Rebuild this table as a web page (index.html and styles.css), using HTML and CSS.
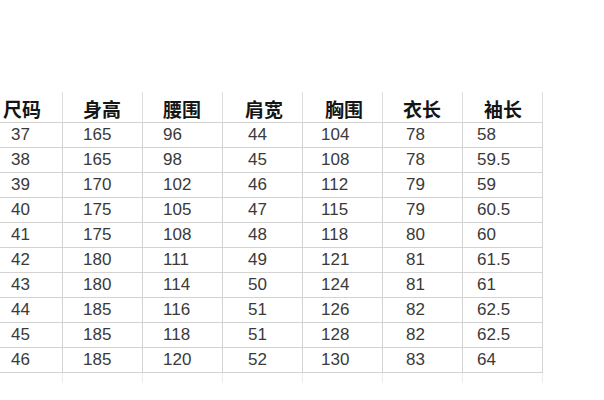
FILE: index.html
```html
<!DOCTYPE html>
<html lang="zh-CN">
<head>
<meta charset="utf-8">
<title>尺码表</title>
<link rel="stylesheet" href="styles.css">
</head>
<body>
<div class="sheet">
  <div class="row head">
    <div class="cell">尺码</div><div class="cell">身高</div><div class="cell">腰围</div><div class="cell">肩宽</div><div class="cell">胸围</div><div class="cell">衣长</div><div class="cell">袖长</div>
  </div>
  <div class="row"><div class="cell">37</div><div class="cell">165</div><div class="cell">96</div><div class="cell">44</div><div class="cell">104</div><div class="cell">78</div><div class="cell">58</div></div>
  <div class="row"><div class="cell">38</div><div class="cell">165</div><div class="cell">98</div><div class="cell">45</div><div class="cell">108</div><div class="cell">78</div><div class="cell">59.5</div></div>
  <div class="row"><div class="cell">39</div><div class="cell">170</div><div class="cell">102</div><div class="cell">46</div><div class="cell">112</div><div class="cell">79</div><div class="cell">59</div></div>
  <div class="row"><div class="cell">40</div><div class="cell">175</div><div class="cell">105</div><div class="cell">47</div><div class="cell">115</div><div class="cell">79</div><div class="cell">60.5</div></div>
  <div class="row"><div class="cell">41</div><div class="cell">175</div><div class="cell">108</div><div class="cell">48</div><div class="cell">118</div><div class="cell">80</div><div class="cell">60</div></div>
  <div class="row"><div class="cell">42</div><div class="cell">180</div><div class="cell">111</div><div class="cell">49</div><div class="cell">121</div><div class="cell">81</div><div class="cell">61.5</div></div>
  <div class="row"><div class="cell">43</div><div class="cell">180</div><div class="cell">114</div><div class="cell">50</div><div class="cell">124</div><div class="cell">81</div><div class="cell">61</div></div>
  <div class="row"><div class="cell">44</div><div class="cell">185</div><div class="cell">116</div><div class="cell">51</div><div class="cell">126</div><div class="cell">82</div><div class="cell">62.5</div></div>
  <div class="row"><div class="cell">45</div><div class="cell">185</div><div class="cell">118</div><div class="cell">51</div><div class="cell">128</div><div class="cell">82</div><div class="cell">62.5</div></div>
  <div class="row"><div class="cell">46</div><div class="cell">185</div><div class="cell">120</div><div class="cell">52</div><div class="cell">130</div><div class="cell">83</div><div class="cell">64</div></div>
  <div class="row tail">
    <div class="cell"></div><div class="cell"></div><div class="cell"></div><div class="cell"></div><div class="cell"></div><div class="cell"></div><div class="cell"></div>
  </div>
</div>
</body>
</html>
```
FILE: styles.css
```css
html, body {
  margin: 0;
  padding: 0;
  background: #ffffff;
}

body {
  width: 604px;
  height: 400px;
  overflow: hidden;
}

.sheet {
  margin-left: -17px;
  padding-top: 92px;
  font-family: "Liberation Sans", Arial, sans-serif;
}

.row {
  display: grid;
  grid-template-columns: repeat(7, 80px);
}

.cell {
  box-sizing: border-box;
  height: 25px;
  border-right: 1px solid #d3d3d3;
  border-bottom: 1px solid #d3d3d3;
  font-size: 17px;
  line-height: 24px;
  color: #3a3a3a;
  white-space: nowrap;
}

.head .cell {
  height: 31px;
  line-height: 30px;
  padding-top: 2px;
  font-family: "Noto Sans CJK SC", "Liberation Sans", sans-serif;
  font-weight: 700;
  font-size: 19px;
  color: #151515;
  border-right-color: #dedede;
}

.tail .cell {
  height: 10px;
  border-bottom: none;
  border-right-color: #ececec;
}

/* per-column text indents, header */
.head .cell:nth-child(1) { padding-left: 20px; }
.head .cell:nth-child(2) { padding-left: 20px; }
.head .cell:nth-child(3) { padding-left: 20px; }
.head .cell:nth-child(4) { padding-left: 22px; }
.head .cell:nth-child(5) { padding-left: 22px; }
.head .cell:nth-child(6) { padding-left: 20px; }
.head .cell:nth-child(7) { padding-left: 21px; }

/* per-column text indents, values */
.row:not(.head) .cell:nth-child(1) { padding-left: 28px; }
.row:not(.head) .cell:nth-child(2) { padding-left: 20px; }
.row:not(.head) .cell:nth-child(3) { padding-left: 20px; }
.row:not(.head) .cell:nth-child(4) { padding-left: 25px; }
.row:not(.head) .cell:nth-child(5) { padding-left: 18px; }
.row:not(.head) .cell:nth-child(6) { padding-left: 23px; }
.row:not(.head) .cell:nth-child(7) { padding-left: 14px; }
```
